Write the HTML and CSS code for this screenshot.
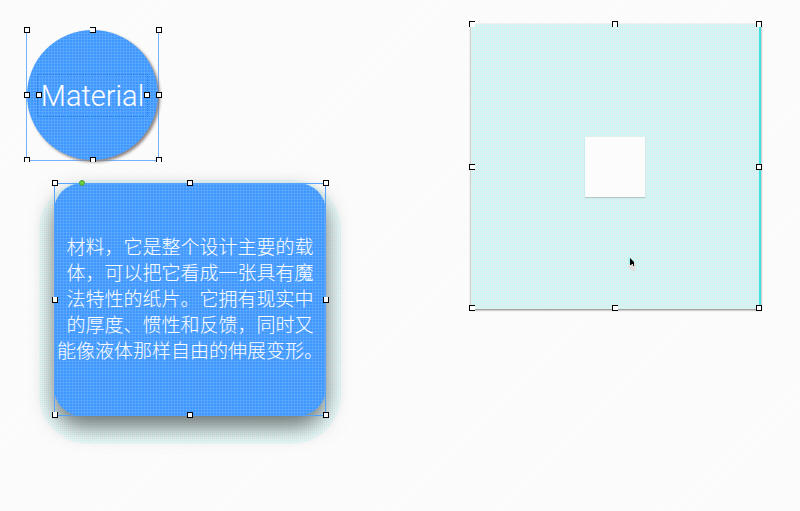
FILE: index.html
```html
<!DOCTYPE html>
<html lang="zh-CN">
<head>
<meta charset="utf-8">
<title>Material</title>
<link rel="stylesheet" href="styles.css">
</head>
<body>
<main class="canvas">
  <section class="item circle">
    <div class="disc"><h1 class="label">Material<i class="handle w"></i><i class="handle e"></i></h1></div>
    <i class="handle n w"></i><i class="handle n open-left"></i><i class="handle n e"></i>
    <i class="handle w"></i><i class="handle e"></i>
    <i class="handle s w open-bottom"></i><i class="handle s open-bottom"></i><i class="handle s e open-bottom"></i>
  </section>

  <section class="item card">
    <p class="surface">材料，它是整个设计主要的载<br>体，可以把它看成一张具有魔<br>法特性的纸片。它拥有现实中<br>的厚度、惯性和反馈，同时又<br>能像液体那样自由的伸展变形。</p>
    <i class="radius-dot"></i>
    <i class="handle n w"></i><i class="handle n"></i><i class="handle n e"></i>
    <i class="handle w open-top"></i><i class="handle e open-top"></i>
    <i class="handle s w open-top"></i><i class="handle s"></i><i class="handle s e"></i>
  </section>

  <section class="item sheet">
    <div class="paper"></div>
    <i class="handle n w open-right open-bottom"></i><i class="handle n open-bottom"></i><i class="handle n e open-bottom"></i>
    <i class="handle w open-right"></i><i class="handle e"></i>
    <i class="handle s w open-right"></i><i class="handle s open-right"></i><i class="handle s e"></i>
    <svg class="cursor" viewBox="0 0 9 15" aria-hidden="true">
      <path d="M0 1L8 7V10L6 11L8 14H5L1 11Z" fill="#e6dddd"/>
      <path d="M2 1V8H3L4 7H5V9H6V7H6V5Z" fill="#000"/>
      <path d="M1 0V7" stroke="#8ff" fill="none"/>
    </svg>
  </section>
</main>
</body>
</html>
```

FILE: styles.css
```css
* { box-sizing: border-box; }

body {
  margin: 0;
  font-family: Roboto, "Liberation Sans", sans-serif;
}

.canvas {
  position: relative;
  min-height: 100vh;
  overflow: hidden;
  background: repeating-linear-gradient(135deg, #fcfcfc 0 2px, #fafafa 2px 3px);
}

/* Objects placed on the free canvas */
.item { position: absolute; }

.circle {
  left: 26px;
  top: 30px;
  width: 133px;
  height: 131px;
  border: 1px solid #74b2ff;
  border-top: 0;
}

.disc {
  display: grid;
  place-items: center;
  height: 100%;
  border-radius: 50%;
  box-shadow: 2px 2px 3px #8f8480;
}

.disc,
.surface {
  background:
    repeating-linear-gradient(0deg, #ffffff1c 0 1px, transparent 1px 3px),
    repeating-linear-gradient(90deg, #ffffff1c 0 1px, transparent 1px 3px),
    #3f98ff;
  color: #fff;
}

.label {
  position: relative;
  margin: 0;
  padding: 1px 3px 0;
  border: 1px dotted #2080e6;
  font-size: 29px;
  font-weight: 300;
  line-height: 40px;
}

.card {
  left: 54px;
  top: 183px;
  width: 272px;
  height: 233px;
}

.card::before {
  content: "";
  position: absolute;
  inset: -3px -15px -28px;
  border-radius: 50px;
  background:
    repeating-linear-gradient(0deg, #fcfcfc99 0 1px, transparent 1px 2px),
    repeating-linear-gradient(90deg, #fcfcfc99 0 1px, transparent 1px 2px),
    #d8fafa;
}

.card::after {
  content: "";
  position: absolute;
  inset: 0;
  border: 1px solid #55a2ff;
}

.surface {
  position: relative;
  display: grid;
  place-content: center;
  height: 100%;
  margin: 0;
  padding-bottom: 4px;
  border-radius: 28px;
  box-shadow: 0 11px 22px #0000008c;
  font-family: "Noto Sans CJK SC", sans-serif;
  font-size: 19px;
  font-weight: 300;
  line-height: 26px;
  text-align: center;
  white-space: nowrap;
}

.radius-dot {
  position: absolute;
  z-index: 1;
  left: 25px;
  top: -3px;
  width: 6px;
  height: 6px;
  border: 1px solid #469b45;
  border-radius: 50%;
  background: #71ce3e;
}

.sheet {
  display: grid;
  place-items: center;
  left: 471px;
  top: 24px;
  width: 290px;
  height: 285px;
  border-right: 2px solid #3fe0e0;
  background:
    repeating-linear-gradient(0deg, #f2e8e866 0 1px, transparent 1px 2px),
    repeating-linear-gradient(90deg, #f2e8e866 0 1px, transparent 1px 2px),
    #c6f8f8;
  box-shadow: 0 1px 2px #7d7777;
}

.paper {
  width: 60px;
  height: 60px;
  background: #fcfcfc;
  box-shadow: 0 1px 1px #b4c6c6;
}

/* Selection handles: centred by default, moved to an edge by n / s / e / w */
.handle {
  position: absolute;
  z-index: 1;
  left: calc(50% - 3px);
  top: calc(50% - 3px);
  width: 6px;
  height: 6px;
  border: 1px solid #000;
  background: #fff;
}

.handle.n { top: -3px; }
.handle.s { top: calc(100% - 4px); }
.handle.w { left: -2px; }
.handle.e { left: calc(100% - 3px); }
.circle > .handle.w { left: -3px; }
.circle > .handle.e { left: calc(100% - 2px); }
.circle > .handle.s { height: 5px; top: calc(100% - 3px); }
.open-top { border-top: 0; }
.open-right { border-right: 0; }
.open-bottom { border-bottom: 0; }
.open-left { border-left: 0; }

.cursor {
  position: absolute;
  left: 157px;
  top: 233px;
  width: 9px;
  height: 15px;
}
```
